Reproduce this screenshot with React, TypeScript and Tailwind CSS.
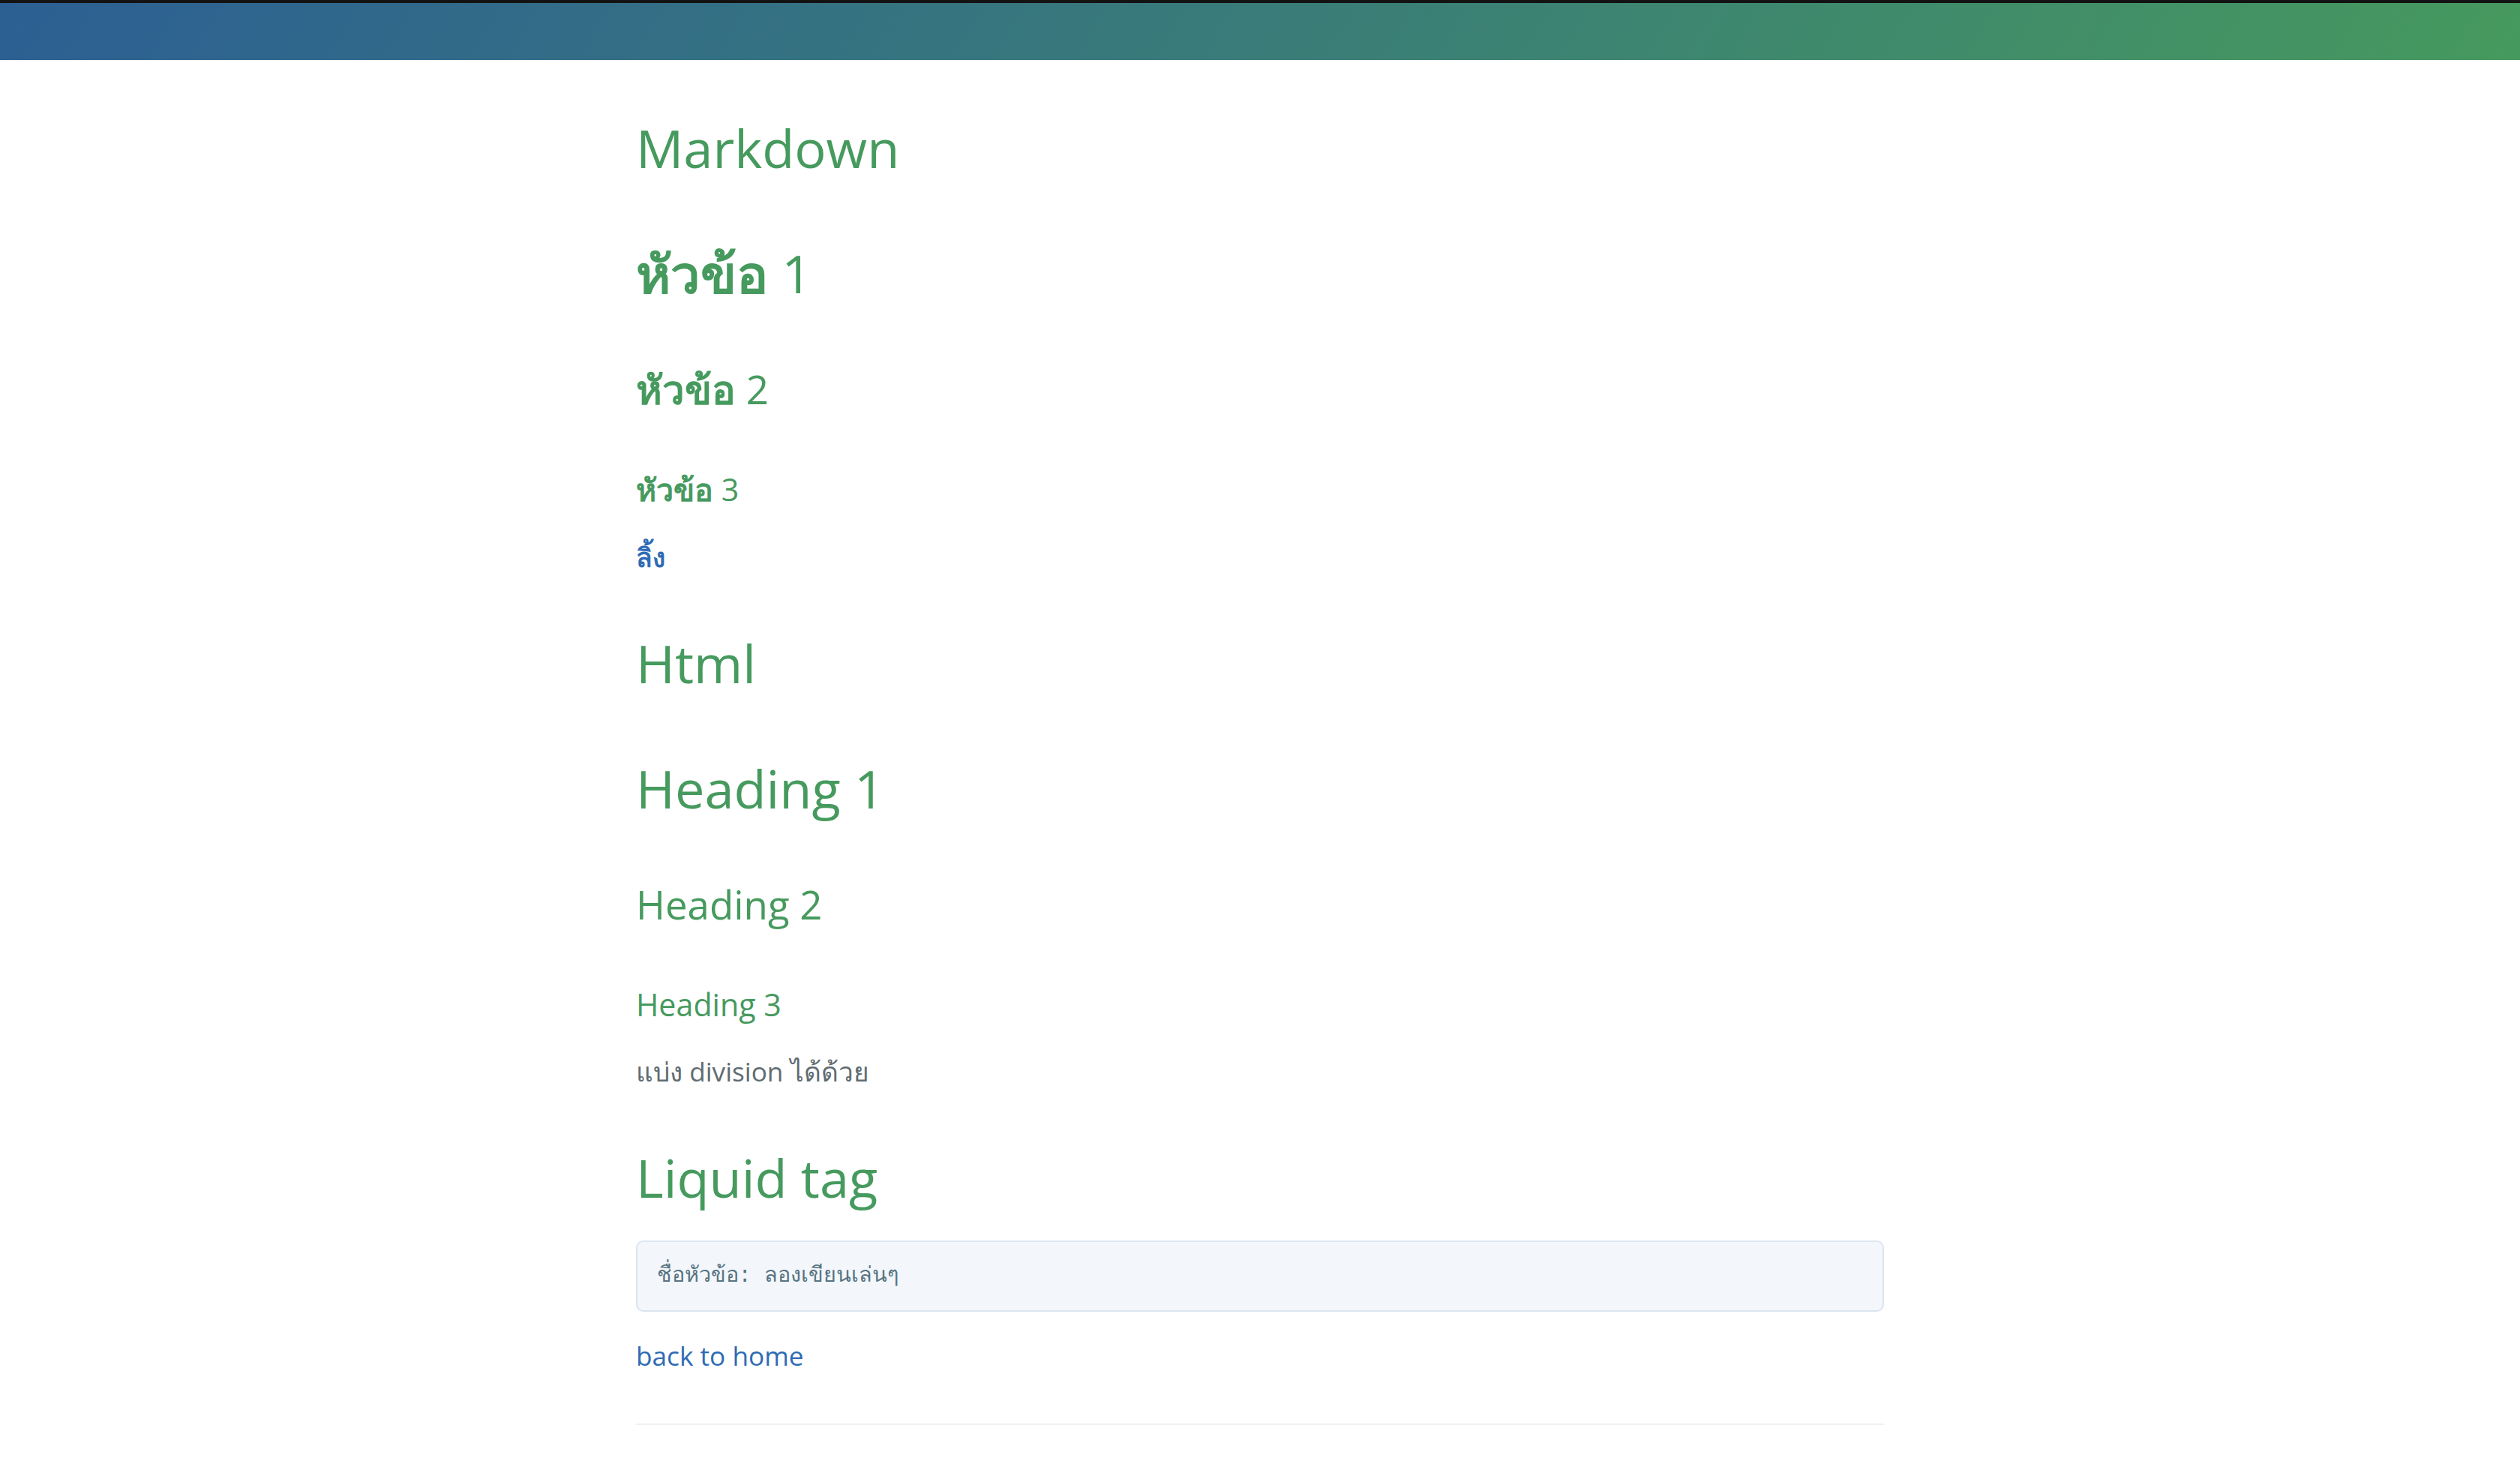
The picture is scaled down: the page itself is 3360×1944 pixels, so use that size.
import React from "react";

// หน้าโพสต์ทดลอง: Markdown / Html / Liquid tag
const sans = "font-['Open_Sans','Noto_Sans',sans-serif]";

function H1({ children, first }: { children: React.ReactNode; first?: boolean }) {
  return (
    <h1
      className={
        first
          ? "mt-0 mb-[32px] text-[70.4px] leading-[103px] font-normal text-[#469a5e]"
          : "mt-[64px] mb-[32px] text-[70.4px] leading-[103px] font-normal text-[#469a5e]"
      }
    >
      {children}
    </h1>
  );
}

function H2({ children }: { children: React.ReactNode }) {
  return <h2 className="mt-[64px] mb-[32px] text-[52.8px] leading-[78px] font-normal text-[#469a5e]">{children}</h2>;
}

function H3({ children }: { children: React.ReactNode }) {
  return <h3 className="mt-[64px] mb-[32px] text-[41.2px] leading-[1.5] font-normal text-[#469a5e]">{children}</h3>;
}

// ข้อความไทยใช้ฟอนต์สำรอง: กัน line box ขยาย
function Th({ children, bold }: { children: React.ReactNode; bold?: boolean }) {
  return <span className={bold ? "leading-none font-semibold" : "leading-none"}>{children}</span>;
}

export default function App() {
  return (
    <div className={`min-h-screen bg-white ${sans}`}>
      <header className="h-[80px] border-t-4 border-[#131313] bg-[linear-gradient(120deg,#2c5f93,#46995e)]" />

      <main className="mx-auto max-w-[2048px] px-[192px] pt-[66px] pb-[64px] text-[35.2px] leading-[1.5] text-[#606c71]">
        <H1 first>Markdown</H1>
        <H1>
          <Th bold>หัวข้อ</Th> 1
        </H1>
        <H2>
          <Th bold>หัวข้อ</Th> 2
        </H2>
        <H3>
          <Th bold>หัวข้อ</Th> 3
        </H3>
        <p className="mt-0 mb-[35.2px]">
          <a href="#" className="text-[#2f6bb5] no-underline">
            <Th bold>ลิ้ง</Th>
          </a>
        </p>

        <H1>Html</H1>
        <H1>Heading 1</H1>
        <H2>Heading 2</H2>
        <H3>Heading 3</H3>
        <div>
          <Th>แบ่ง</Th> division <Th>ได้ด้วย</Th>
        </div>

        <H1>Liquid tag</H1>
        <pre className="mt-0 mb-[32px] rounded-[9.6px] border-2 border-[#dce6f0] bg-[#f3f6fa] p-[25.6px] font-['Liberation_Mono',monospace] text-[28.8px] leading-[40px] text-[#567482]">
          <code>
            <Th>ชื่อหัวข้อ: ลองเขียนเล่นๆ</Th>
          </code>
        </pre>

        <p className="mt-0 mb-[35.2px]">
          <a href="#" className="text-[#2f6bb5] no-underline">
            back to home
          </a>
        </p>

        <footer className="mt-[64px] border-t-2 border-[#eff0f1] pt-[64px]" />
      </main>
    </div>
  );
}
